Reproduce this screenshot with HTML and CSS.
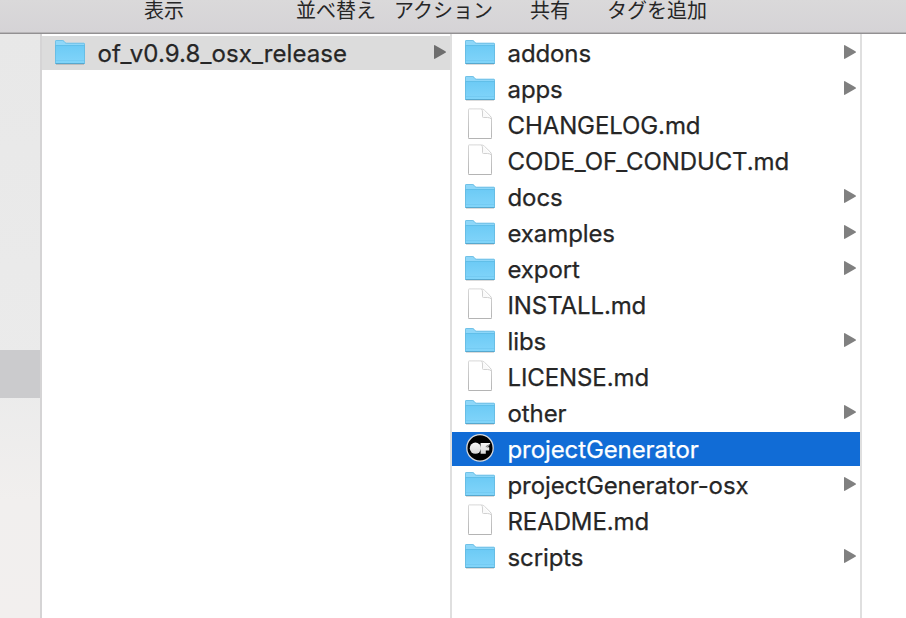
FILE: index.html
```html
<!DOCTYPE html>
<html lang="ja">
<head>
    <meta charset="UTF-8">
    <meta name="viewport" content="width=device-width, initial-scale=1.0">
    <title>of_v0.9.8_osx_release</title>
    <link rel="stylesheet" href="styles.css">
</head>
<body>
    <svg class="defs" width="0" height="0">
        <defs>
            <linearGradient id="folderFill" x1="0" y1="0" x2="0" y2="1">
                <stop offset="0" stop-color="#6ccaf5"/>
                <stop offset="1" stop-color="#82d5fa"/>
            </linearGradient>
            <linearGradient id="fileEdge" x1="0" y1="0" x2="0" y2="1">
                <stop offset="0" stop-color="#d8d8d8"/>
                <stop offset="1" stop-color="#b4b4b4"/>
            </linearGradient>
            <linearGradient id="logoFill" x1="0" y1="0" x2="0" y2="1">
                <stop offset="0" stop-color="#f6f6f6"/>
                <stop offset="1" stop-color="#d8d8d8"/>
            </linearGradient>
        </defs>
        <symbol id="folder" viewBox="0 0 32 34">
            <path d="M2 28.500h28" stroke="#000" stroke-opacity=".14" fill="none"/>
            <path d="M1 5.200Q1 4 2.200 4H8.500Q9.500 4 10.200 4.900L11.300 6.200Q11.800 6.800 12.800 6.800H29.800Q31 6.800 31 8V27Q31 28 30 28H2Q1 28 1 27Z" fill="#8ed7f9"/>
            <path d="M1 9H31V27Q31 28 30 28H2Q1 28 1 27Z" fill="url(#folderFill)"/>
            <path d="M1.500 5.500Q1.500 4.500 2.500 4.500H8.500Q9.300 4.500 9.900 5.300L11 6.600Q11.600 7.300 12.600 7.300H29.700Q30.500 7.300 30.500 8.200V26.500Q30.500 27.500 29.500 27.500H2.500Q1.500 27.500 1.500 26.500Z" fill="none" stroke="#5fb2d9" stroke-opacity=".6"/>
            <path d="M2 9.500H30" stroke="#5bb8e2" stroke-opacity=".65"/>
            <path d="M2 24.500H30" stroke="#68c2ea" stroke-opacity=".45"/>
            <path d="M1.500 27.500H30.500" stroke="#57a8ce"/>
        </symbol>
        <symbol id="file" viewBox="0 0 32 34">
            <path d="M5 .9H17.500Q19 .9 20.500 2.300L26 7.700Q27.500 9.200 27.500 11V29.500Q27.500 30.500 26.500 30.500H5.500Q4.500 30.500 4.500 29.500V1.500Q4.500 .9 5 .9Z" fill="#fff" stroke="url(#fileEdge)"/>
            <path d="M17.500 1Q18.500 2 18.500 4V8.500Q18.500 9.500 19.500 9.500H23.500Q26 9.500 27.300 11" fill="#fafafa" stroke="#d2d2d2"/>
            <path d="M4.500 30.500H27.500" stroke="#b4b4b4"/>
        </symbol>
        <symbol id="logo" viewBox="0 0 32 34">
            <circle cx="16" cy="15.900" r="13.200" fill="#000" stroke="#d6d9de" stroke-width="1.300"/>
            <circle cx="11.400" cy="16.200" r="5.600" fill="url(#logoFill)"/>
            <path d="M16.600 10.900H26.300L24.800 14.300L22.400 15.200H25.200V18.600H21.800V21.700H16.600Z" fill="url(#logoFill)"/>
            <path d="M21.800 14.600L25.800 12.600" stroke="#333" stroke-width=".7"/>
        </symbol>
        <symbol id="arrow" viewBox="0 0 12 14">
            <path d="M0 1Q0 -.4 1.400 .4L11.400 6.200Q12.600 7 11.400 7.800L1.400 13.600Q0 14.400 0 13Z" fill="currentColor"/>
        </symbol>
    </svg>

    <div class="window">
        <header class="toolbar">
            <span class="view">表示</span>
            <span class="sort">並べ替え</span>
            <span class="action">アクション</span>
            <span class="share">共有</span>
            <span class="tag">タグを追加</span>
        </header>
        <main class="browser">
            <aside class="sidebar">
                <div class="sidebar-current"></div>
            </aside>
            <ul class="column">
                <li class="row open"><svg class="icon"><use href="#folder"/></svg><span class="name">of_v0.9.8_osx_release</span><svg class="arrow"><use href="#arrow"/></svg></li>
            </ul>
            <ul class="column">
                <li class="row"><svg class="icon"><use href="#folder"/></svg><span class="name">addons</span><svg class="arrow"><use href="#arrow"/></svg></li>
                <li class="row"><svg class="icon"><use href="#folder"/></svg><span class="name">apps</span><svg class="arrow"><use href="#arrow"/></svg></li>
                <li class="row"><svg class="icon"><use href="#file"/></svg><span class="name">CHANGELOG.md</span></li>
                <li class="row"><svg class="icon"><use href="#file"/></svg><span class="name">CODE_OF_CONDUCT.md</span></li>
                <li class="row"><svg class="icon"><use href="#folder"/></svg><span class="name">docs</span><svg class="arrow"><use href="#arrow"/></svg></li>
                <li class="row"><svg class="icon"><use href="#folder"/></svg><span class="name">examples</span><svg class="arrow"><use href="#arrow"/></svg></li>
                <li class="row"><svg class="icon"><use href="#folder"/></svg><span class="name">export</span><svg class="arrow"><use href="#arrow"/></svg></li>
                <li class="row"><svg class="icon"><use href="#file"/></svg><span class="name">INSTALL.md</span></li>
                <li class="row"><svg class="icon"><use href="#folder"/></svg><span class="name">libs</span><svg class="arrow"><use href="#arrow"/></svg></li>
                <li class="row"><svg class="icon"><use href="#file"/></svg><span class="name">LICENSE.md</span></li>
                <li class="row"><svg class="icon"><use href="#folder"/></svg><span class="name">other</span><svg class="arrow"><use href="#arrow"/></svg></li>
                <li class="row selected"><svg class="icon"><use href="#logo"/></svg><span class="name">projectGenerator</span></li>
                <li class="row"><svg class="icon"><use href="#folder"/></svg><span class="name">projectGenerator-osx</span><svg class="arrow"><use href="#arrow"/></svg></li>
                <li class="row"><svg class="icon"><use href="#file"/></svg><span class="name">README.md</span></li>
                <li class="row"><svg class="icon"><use href="#folder"/></svg><span class="name">scripts</span><svg class="arrow"><use href="#arrow"/></svg></li>
            </ul>
        </main>
    </div>
</body>
</html>
```
FILE: styles.css
```css
* {
    box-sizing: border-box;
}
body {
    margin: 0;
    background: #fff;
    color: #262626;
    font-family: Inter, "Noto Sans CJK JP", sans-serif;
    overflow: hidden;
}
.defs {
    display: block;
}
.window {
    display: flex;
    flex-direction: column;
    height: 100vh;
}
.toolbar {
    display: flex;
    flex: none;
    height: 34px;
    padding-left: 144px;
    background: linear-gradient(#dad9da, #d5d3d6);
    border-bottom: 1px solid #929092;
    box-shadow: inset 0 -1px #b7b5b7;
    font-family: "Noto Sans CJK JP", sans-serif;
    font-size: 20px;
    line-height: 20px;
    white-space: nowrap;
}
.sort {
    margin-left: 112px;
}
.action {
    margin-left: 18px;
}
.share {
    margin-left: 37px;
}
.tag {
    margin-left: 37px;
}
.browser {
    display: flex;
    flex: 1;
    min-height: 0;
}
.sidebar {
    flex: none;
    width: 42px;
    padding-top: 316px;
    background: linear-gradient(#e8e8e8, #ebebeb 60%, #f1efee 80%, #f2efee);
    border-right: 2px solid #d5d4d5;
}
.sidebar-current {
    height: 48px;
    background: #cbcbcd;
}
.column {
    display: flex;
    flex-direction: column;
    flex: none;
    gap: 2px;
    width: 410px;
    margin: 0;
    padding: 2px 0 0;
    border-right: 2px solid #dfdfdf;
    list-style: none;
}
.row {
    display: flex;
    flex: none;
    height: 34px;
    padding: 0 4px 0 12px;
}
.icon {
    flex: none;
    width: 32px;
    height: 34px;
}
.name {
    flex: 1;
    margin-left: 11.5px;
    font-size: 24px;
    letter-spacing: -0.1px;
    line-height: 36px;
    white-space: nowrap;
    -webkit-text-stroke: 0.25px currentColor;
}
.arrow {
    flex: none;
    width: 12px;
    height: 14px;
    margin-top: 9px;
    color: #808080;
}
.open {
    background: #dcdcdc;
}
.open .name {
    letter-spacing: 0.08px;
}
.open .arrow {
    color: #6e6e6e;
}
.selected {
    background: #116cd6;
    color: #fff;
}
```
